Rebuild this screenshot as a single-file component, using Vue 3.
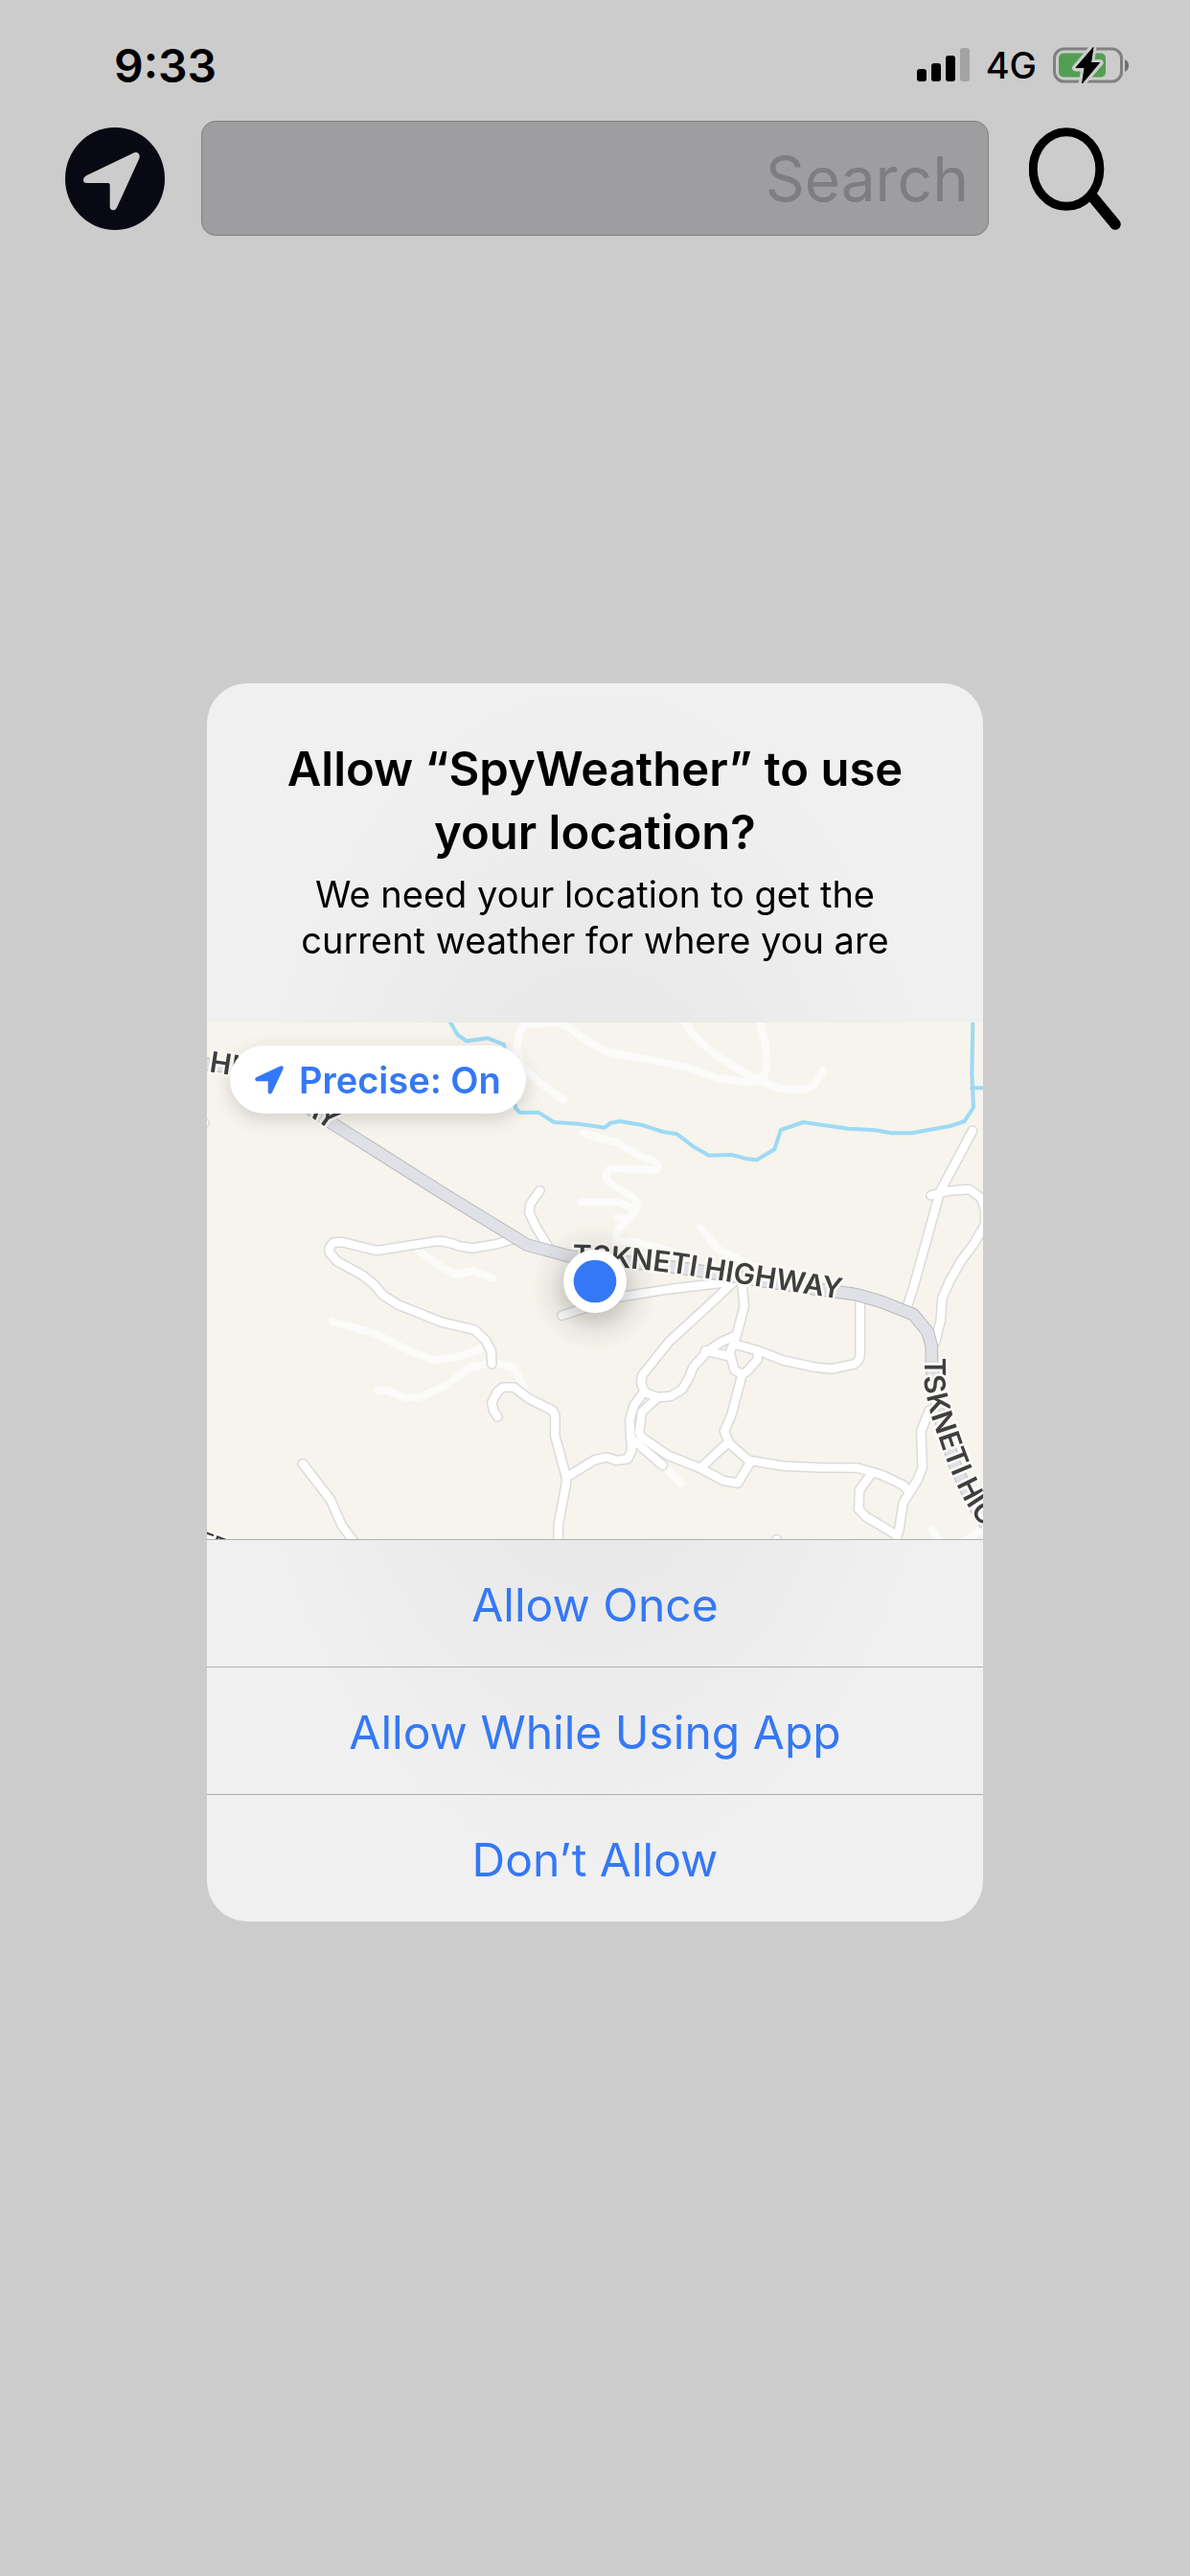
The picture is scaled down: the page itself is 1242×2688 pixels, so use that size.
<script setup>
import { ref } from 'vue'

const query = ref('')
const precise = ref(true)
const choices = ['Allow Once', 'Allow While Using App', 'Don’t Allow']

const tracks = [
  'M1117 241 L1042 189 L985 135 L969 80 L980 25 L1000 5 L1102 1 L1135 15 L1172 47 L1212 69 L1247 91 L1362 112 L1502 139 L1597 174 L1692 187 L1745 178',
  'M1497 -1 L1522 37 Q1560 78 1612 114 L1712 174 L1792 207 L1867 210 L1897 200 L1929 150',
  'M1732 -1 L1749 69 L1752 139 L1742 169 L1720 182',
  'M1179 346 L1222 360 L1282 374 L1357 419 L1395 432 Q1422 448 1407 461 L1262 457 Q1238 480 1257 499 L1335 548 Q1350 560 1347 584 L1287 649 Q1272 678 1292 684 L1347 687 L1500 730',
  'M1172 561 H1287 L1337 584',
  'M1284 611 H1325',
  'M1544 641 L1602 711 L1712 764',
  'M662 714 L747 774 L782 789 L832 777 L894 801',
  'M394 936 L527 974 L622 1022 L707 1057 L777 1049 L850 1025 L880 1005',
  'M534 1151 L562 1151 L622 1174 L662 1174 L747 1137 L822 1081 L892 1064 L957 1079 L982 1119 L1000 1160',
  'M1437 1394 L1484 1442',
  'M2270 1587 L2300 1630',
  'M2430 1584 L2365 1627',
]

const streets = [
  'M957 679 L900 695 L832 706 L790 700 Q755 685 722 684 L532 714 L422 687 L397 689 Q378 705 384 720 L407 747 L487 791 L522 819 L552 854 L600 884 L732 937 L837 962 L872 994 L890 1029 L892 1069',
  'M1042 526 L1012 569 L1009 594 L1027 634 L1070 705',
  'M910 1234 L897 1214 L892 1189 L910 1155 L927 1142 L962 1142 L1007 1177 L1082 1214 L1090 1229 V1294 L1125 1424 V1440 L1100 1574 V1630',
  'M1125 1424 L1212 1370 L1252 1361 L1282 1371 L1317 1366 L1330 1339 L1327 1300 L1324 1244 L1337 1199 L1365 1160',
  'M1652 809 L1572 884 L1447 999 L1362 1105 L1360 1130 L1372 1159 L1412 1173 L1452 1170 L1487 1149 L1508 1115 L1522 1079 L1567 1029 L1612 999 L1652 982',
  'M1412 1173 L1362 1219 L1353 1284 L1360 1297 L1442 1354 L1542 1394 L1617 1434 L1662 1442 L1702 1376 L1632 1314 L1550 1390',
  'M1327 1300 L1427 1386',
  'M1675 810 L1682 889 L1657 984 L1637 1034 L1652 1089 L1675 1100 L1690 1093 L1724 1055 V1032',
  'M1560 1027 L1640 1046',
  'M1657 1008 L1732 1029 L1802 1057 L1902 1079 L1957 1084 L2025 1070 Q2045 1060 2045 1039 V875',
  'M1675 1104 L1642 1229 L1620 1279 L1634 1314',
  'M1707 1372 L1802 1388 L1912 1393 L2037 1394 L2112 1416 L2180 1448 L2198 1470',
  'M2262 1214 L2236 1279 L2240 1394 L2225 1431 L2180 1504 L2167 1589 L2155 1630',
  'M2077 1417 L2043 1464 L2041 1524 L2062 1546 L2160 1605',
  'M2397 339 L2295 530 L2212 830 L2192 890',
  'M2267 541 L2322 527 L2387 522 L2425 550 L2437 590 V630 L2402 692 L2362 745 L2325 810 L2302 864 L2297 934 L2280 1000',
  'M1112 917 L1200 888 L1292 859 L1452 834 L1640 812',
  'M300 1381 L387 1494 L422 1574 L465 1632',
  'M1784 1618 V1640',
  'M-16 314 H-8',
]

const highway =
  'M-20 128 L112 144 L240 200 L330 275 L382 309 L722 524 L1002 696 L1132 731 L1452 764 L1560 780 L1860 828 L2032 851 L2112 874 L2212 914 L2257 969 L2269 1014 V1079 L2290 1219 L2340 1380 L2395 1500 L2450 1590'

const rivers = [
  'M762 -1 L785 39 L814 58 L880 49 L930 69 L950 180 L967 269 L980 282 L1037 281 L1087 312 L1162 317 L1212 324 L1245 329 L1264 314 L1292 309 L1367 322 L1427 342 L1472 349 L1527 391 L1572 416 L1642 414 L1692 427 L1722 430 L1777 397 L1797 336 L1867 312 L2007 332 L2092 337 L2142 346 L2207 346 L2327 324 L2372 309 L2400 266 L2395 159 L2398 -1',
  'M2395 205 H2440',
]
</script>

<template>
  <div class="screen">
    <header class="status">
      <time class="clock">9:33</time>
      <div class="indicators">
        <svg class="signal" viewBox="0 0 55 36" aria-hidden="true">
          <rect x="0" y="22" width="10" height="13" rx="3" />
          <rect x="15" y="16" width="10" height="19" rx="3" />
          <rect x="30" y="8" width="10" height="27" rx="3" />
          <rect x="45" y="0" width="10" height="35" rx="3" fill="#a3a3a3" />
        </svg>
        <span class="network">4G</span>
        <svg class="battery" viewBox="0 0 80 40" aria-hidden="true">
          <rect x="1.5" y="3" width="70" height="34" rx="10" fill="none" stroke="#808080" stroke-width="3" />
          <path d="M75 14 Q79 16 79 20.500 Q79 25 75 27 Z" fill="#6e6e6e" />
          <rect x="6" y="7.500" width="49" height="25" rx="5" fill="#529f52" />
          <path d="M42 1 L23.500 23 H33 L30 39.500 L49 17.500 H39.500 Z" fill="#000" stroke="#ccc" stroke-width="7" stroke-linejoin="round" />
          <path d="M42 1.500 L24 22.500 H33 L30.500 39 L48.500 17.500 H39.500 Z" fill="#000" stroke="#000" stroke-width="1" stroke-linejoin="round" />
        </svg>
      </div>
    </header>

    <form class="toolbar" @submit.prevent>
      <button class="icon locate" type="button" aria-label="Use current location">
        <svg viewBox="0 0 104 107">
          <ellipse cx="52" cy="53.500" rx="52" ry="53.500" fill="#090914" />
          <path
            d="M70 27.300 Q74 25 76.500 27 Q78.600 29 77.500 32 L54 83.500 Q52.800 86.300 50.300 86.300 Q46.700 86.300 46.700 82.500 V60 Q46.700 58 44.700 58 H22.500 Q19 58 19 54.500 Q19 52 22 50.300 Z"
            fill="#ccc"
          />
        </svg>
      </button>
      <input v-model="query" class="field" type="text" placeholder="Search" aria-label="Search" />
      <button class="icon find" type="submit" aria-label="Search">
        <svg viewBox="0 0 96 107" fill="none" stroke="#000">
          <ellipse cx="39" cy="43.500" rx="34.800" ry="38.800" stroke-width="9" />
          <path d="M66 72 L90 101" stroke-width="11.500" stroke-linecap="round" />
        </svg>
      </button>
    </form>

    <div class="overlay">
      <section class="dialog" role="alertdialog" aria-labelledby="dialog-title" aria-describedby="dialog-text">
        <div class="message">
          <h1 id="dialog-title">Allow “SpyWeather” to use your location?</h1>
          <p id="dialog-text">We need your location to get the current weather for where you are</p>
        </div>

        <div class="map">
          <svg class="tiles" viewBox="0 0 2430 1617">
            <defs>
              <path id="label-west" d="M5 154 L110 170 Q250 215 330 298 L440 375" />
              <path id="label-centre" d="M1145 760 Q1300 762 1480 787 L2100 884" />
              <path id="label-east" d="M2246 1049 V1130 Q2262 1230 2295 1310 Q2335 1430 2380 1510 L2540 1750" />
              <radialGradient id="dot-shadow">
                <stop offset="0.400" stop-color="#000" stop-opacity="0.180" />
                <stop offset="0.700" stop-color="#000" stop-opacity="0.050" />
                <stop offset="1" stop-color="#000" stop-opacity="0" />
              </radialGradient>
            </defs>
            <rect width="2430" height="1617" fill="#f6f4ec" />
            <g class="lines">
              <path v-for="d in rivers" :key="d" :d="d" stroke="#9cdaf5" stroke-width="12" />
              <path v-for="d in tracks" :key="d" :d="d" stroke="#fbfbfa" stroke-width="24" />
              <path v-for="d in streets" :key="'c' + d" :d="d" stroke="#dadbda" stroke-width="34" />
              <path v-for="d in streets" :key="'f' + d" :d="d" stroke="#fff" stroke-width="25" />
              <path :d="highway" stroke="#b9babd" stroke-width="41" />
              <path :d="highway" stroke="#e0e1e6" stroke-width="35" />
            </g>
            <g class="labels">
              <text><textPath href="#label-west">HIGHWAY</textPath></text>
              <text><textPath href="#label-centre">TSKNETI HIGHWAY</textPath></text>
              <text><textPath href="#label-east">TSKNETI HIGHWAY</textPath></text>
              <text class="small" transform="translate(-28 1636) rotate(20)">EET</text>
            </g>
            <circle cx="1215" cy="830" r="200" fill="url(#dot-shadow)" />
            <circle cx="1215" cy="810" r="99" fill="#fff" />
            <circle cx="1215" cy="810" r="67" fill="#3478f6" />
          </svg>
          <button class="precise" type="button" :aria-pressed="precise" @click="precise = !precise">
            <svg viewBox="0 0 30 30" aria-hidden="true">
              <path d="M26.500 0.500 Q30.500 -0.500 29.500 3.500 L18 28 Q17 29.500 15.500 29.500 Q13.800 29.500 13.700 27.500 V16.300 H2 Q0.200 16 0.200 14.300 Q0.200 13 1.800 12 Z" fill="#3478f6" />
            </svg>
            <span>Precise: {{ precise ? 'On' : 'Off' }}</span>
          </button>
        </div>

        <div class="actions">
          <button v-for="choice in choices" :key="choice" type="button">{{ choice }}</button>
        </div>
      </section>
    </div>
  </div>
</template>

<style>
body {
  margin: 0;
  background: #ccc;
}
</style>

<style scoped>
.screen {
  min-height: 100vh;
  background: #ccc;
  color: #000;
  font-family: Inter, "Liberation Sans", sans-serif;
}

button {
  margin: 0;
  padding: 0;
  border: 0;
  background: none;
  font: inherit;
  cursor: pointer;
}

svg {
  display: block;
}

.status {
  display: flex;
  align-items: center;
  justify-content: space-between;
  box-sizing: border-box;
  height: 126px;
  padding: 10px 63px 0 119px;
}

.clock {
  font-size: 48px;
  font-weight: 600;
}

.indicators {
  display: flex;
  align-items: center;
  gap: 17px;
}

.signal {
  width: 55px;
  height: 36px;
}

.network {
  font-size: 38px;
  font-weight: 500;
}

.battery {
  width: 80px;
  height: 40px;
}

.toolbar {
  display: flex;
  align-items: center;
  padding: 0 72px 0 68px;
}

.icon {
  flex: none;
}

.locate {
  width: 104px;
}

.find {
  width: 96px;
}

.field {
  flex: 1;
  min-width: 0;
  box-sizing: border-box;
  height: 120px;
  margin: 0 42px 0 38px;
  padding: 0 20px;
  border: 1px solid #7f7f80;
  border-radius: 15px;
  outline: 0;
  background: #9e9ea0;
  color: #000;
  font-family: inherit;
  font-size: 64px;
  text-align: right;
}

.field::placeholder {
  color: #7e7e80;
  opacity: 1;
}

.overlay {
  position: fixed;
  inset: 0;
  display: grid;
  place-items: center;
  padding-top: 30px;
  pointer-events: none;
}

.dialog {
  width: min(810px, 94%);
  overflow: hidden;
  border-radius: 42px;
  background: radial-gradient(ellipse at 50% 48%, #e4e4e4 0, #e8e8e8 25%, #f0f0f0 65%);
  pointer-events: auto;
}

.message {
  padding: 57px 72px 62px;
  text-align: center;
}

h1 {
  margin: 0 0 7px;
  font-size: 49px;
  font-weight: 600;
  line-height: 66px;
}

p {
  margin: 0;
  font-size: 38px;
  line-height: 48px;
}

.map {
  position: relative;
}

.tiles {
  width: 100%;
}

.lines {
  fill: none;
  stroke-linecap: round;
  stroke-linejoin: round;
}

.labels {
  fill: #3f3f3f;
  stroke: #fbfaf6;
  stroke-width: 16px;
  stroke-linejoin: round;
  paint-order: stroke;
  font-size: 90px;
  font-weight: 600;
}

.small {
  font-size: 66px;
  font-weight: 500;
}

.precise {
  position: absolute;
  top: 24px;
  left: 24px;
  display: flex;
  align-items: center;
  gap: 16px;
  height: 71px;
  padding: 0 26px;
  border-radius: 36px;
  background: #fff;
  box-shadow: 0 6px 20px rgba(0, 0, 0, 0.15);
  color: #3478f6;
  font-size: 38px;
  font-weight: 600;
}

.precise svg {
  width: 30px;
  height: 30px;
}

.actions {
  display: flex;
  flex-direction: column;
}

.actions button {
  height: 133px;
  padding-top: 3px;
  border-top: 1px solid #b0b0b2;
  color: #3478f6;
  font-size: 48px;
}
</style>
